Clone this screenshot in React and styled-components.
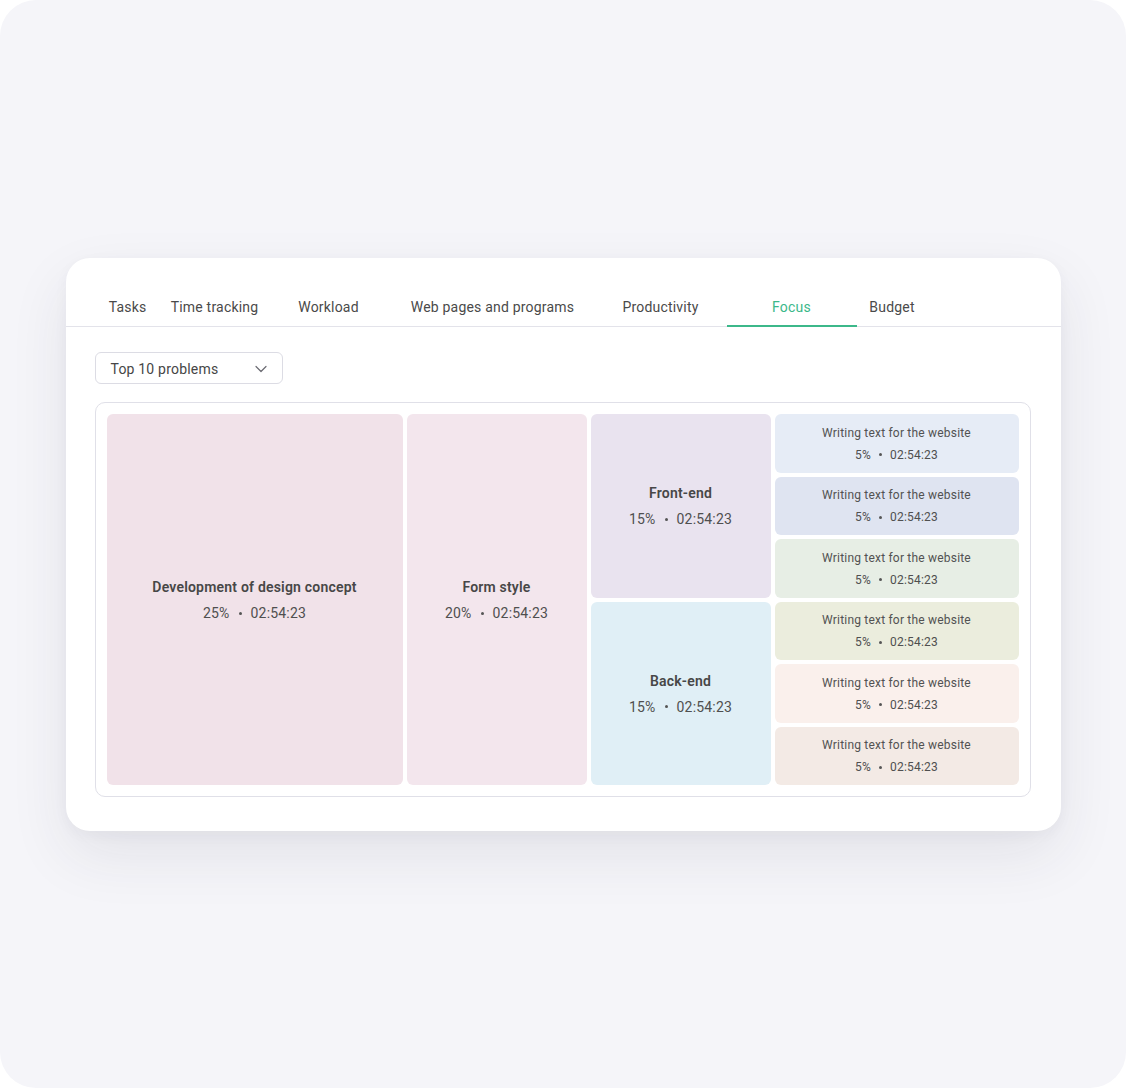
import React from "react";
import styled, { createGlobalStyle } from "styled-components";

const GlobalStyle = createGlobalStyle`
  html, body {
    margin: 0;
    padding: 0;
    background: #ffffff;
  }
  body {
    font-family: Roboto, "Liberation Sans", Arial, sans-serif;
    color: #474747;
    letter-spacing: 0.2px;
  }
`;

const Page = styled.div`
  width: 1126px;
  height: 1088px;
  background: #f5f5f9;
  border-radius: 36px;
  display: flex;
  align-items: center;
  justify-content: center;
`;

const Card = styled.div`
  width: 995px;
  background: #ffffff;
  border-radius: 24px;
  box-shadow: 0 24px 60px rgba(40, 40, 70, 0.09), 0 4px 14px rgba(40, 40, 70, 0.04);
  padding-bottom: 34px;
  margin-top: 1px;
`;

const TabBar = styled.div`
  display: flex;
  padding: 0 27px;
  border-bottom: 1px solid #e3e3ea;
`;

const Tab = styled.div`
  position: relative;
  width: ${(p) => p.$w}px;
  height: 68px;
  box-sizing: border-box;
  padding-bottom: 9px;
  display: flex;
  align-items: flex-end;
  justify-content: center;
  font-size: 14px;
  line-height: 20px;
  color: ${(p) => (p.$active ? "#3cb88a" : "#4a4a4a")};
  white-space: nowrap;

  &::after {
    content: "";
    display: ${(p) => (p.$active ? "block" : "none")};
    position: absolute;
    left: 0;
    right: 0;
    bottom: -1px;
    height: 2px;
    background: #3cb88a;
  }
`;

const Body = styled.div`
  padding: 25px 30px 0 29px;
`;

const Select = styled.div`
  width: 188px;
  height: 32px;
  box-sizing: border-box;
  border: 1px solid #dcdce4;
  border-radius: 6px;
  display: flex;
  align-items: center;
  justify-content: space-between;
  padding: 1px 14px 0 15px;
  font-size: 14px;
  color: #464646;
`;

const Treemap = styled.div`
  margin-top: 18px;
  height: 395px;
  box-sizing: border-box;
  border: 1px solid #e0e0e8;
  border-radius: 10px;
  padding: 11px;
  display: grid;
  grid-template-columns: 296px 180px 180px 1fr;
  gap: 4px;
`;

const Column = styled.div`
  display: flex;
  flex-direction: column;
  gap: 4px;
`;

const Tile = styled.div`
  flex: 1;
  background: ${(p) => p.$bg};
  border-radius: 6px;
  display: flex;
  flex-direction: column;
  align-items: center;
  justify-content: center;
  text-align: center;
  gap: ${(p) => (p.$small ? "6px" : "8px")};
  padding-top: 1px;
`;

const Title = styled.div`
  font-size: 14px;
  line-height: 18px;
  font-weight: 600;
  color: #474747;
`;

const SmallTitle = styled.div`
  font-size: 12px;
  line-height: 16px;
  color: #525252;
`;

const Meta = styled.div`
  display: flex;
  align-items: center;
  font-size: ${(p) => (p.$small ? "12px" : "14px")};
  line-height: ${(p) => (p.$small ? "16px" : "18px")};
  color: #4f4f4f;
`;

const Dot = styled.span`
  display: inline-block;
  width: 3px;
  height: 3px;
  border-radius: 50%;
  background: #555;
  margin: 0 ${(p) => (p.$small ? "8px" : "9px")};
`;

const tabs = [
  { label: "Tasks", w: 70 },
  { label: "Time tracking", w: 104 },
  { label: "Workload", w: 124 },
  { label: "Web pages and programs", w: 204 },
  { label: "Productivity", w: 132 },
  { label: "Focus", w: 130, active: true },
  { label: "Budget", w: 71 },
];

const smallTiles = ["#e6ecf6", "#dfe4f1", "#e7eee5", "#ebeddd", "#faf0ec", "#f3eae5"];

const Chevron = () => (
  <svg width="14" height="14" viewBox="0 0 14 14" fill="none">
    <path d="M2 4.5l5 5 5-5" stroke="#6b6b72" strokeWidth="1.2" strokeLinecap="round" strokeLinejoin="round" />
  </svg>
);

const BigTile = ({ bg, title, pct }) => (
  <Tile $bg={bg}>
    <Title>{title}</Title>
    <Meta>
      {pct}
      <Dot />
      02:54:23
    </Meta>
  </Tile>
);

const App = () => {
  return (
    <>
      <GlobalStyle />
      <Page>
        <Card>
          <TabBar>
            {tabs.map((t) => (
              <Tab key={t.label} $w={t.w} $active={t.active}>
                {t.label}
              </Tab>
            ))}
          </TabBar>
          <Body>
            <Select>
              Top 10 problems
              <Chevron />
            </Select>
            <Treemap>
              <Column>
                <BigTile bg="#f1e2e9" title="Development of design concept" pct="25%" />
              </Column>
              <Column>
                <BigTile bg="#f3e6ed" title="Form style" pct="20%" />
              </Column>
              <Column>
                <BigTile bg="#e9e3ef" title="Front-end" pct="15%" />
                <BigTile bg="#e0eff6" title="Back-end" pct="15%" />
              </Column>
              <Column>
                {smallTiles.map((bg, i) => (
                  <Tile key={i} $bg={bg} $small>
                    <SmallTitle>Writing text for the website</SmallTitle>
                    <Meta $small>
                      5%
                      <Dot $small />
                      02:54:23
                    </Meta>
                  </Tile>
                ))}
              </Column>
            </Treemap>
          </Body>
        </Card>
      </Page>
    </>
  );
};

export default App;
